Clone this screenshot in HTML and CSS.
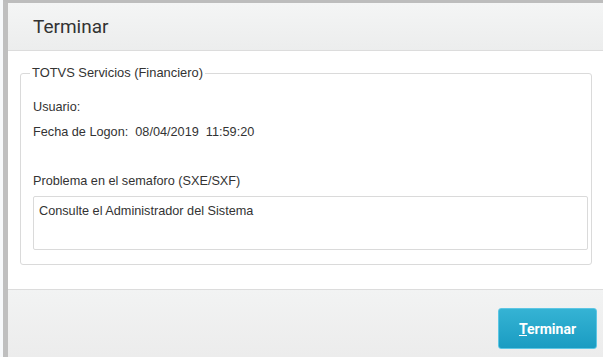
FILE: index.html
```html
<!DOCTYPE html>
<html lang="es">
<head>
  <meta charset="UTF-8">
  <title>Terminar</title>
  <link rel="stylesheet" href="styles.css">
</head>
<body>

  <div class="page">
    <div class="dialog">
      <div class="dialog-header">
        <h2>Terminar</h2>
      </div>

      <div class="dialog-body">
        <fieldset class="group">
          <legend>TOTVS Servicios (Financiero)</legend>
          <p class="line first">Usuario:</p>
          <p class="line">Fecha de Logon:&nbsp; 08/04/2019&nbsp; 11:59:20</p>
          <p class="line problem">Problema en el semaforo (SXE/SXF)</p>
          <div class="message">Consulte el Administrador del Sistema</div>
        </fieldset>
      </div>

      <div class="dialog-footer">
        <button class="btn-primary"><u>T</u>erminar</button>
      </div>
    </div>
  </div>

</body>
</html>
```

FILE: styles.css
```css
html, body {
  margin: 0;
  height: 100%;
}

body {
  font-family: 'Liberation Sans', Arial, sans-serif;
  background: #f7f9fb;
  color: #333;
}

.page {
  height: 100%;
  padding-left: 3px;
  box-sizing: border-box;
}

.dialog {
  height: 100%;
  box-sizing: border-box;
  border-top: 3px solid #bdbdbd;
  border-left: 5px solid #bfbfbf;
  background: #fff;
  display: flex;
  flex-direction: column;
}

.dialog-header {
  height: 47px;
  display: flex;
  align-items: center;
  padding-left: 25px;
  background: linear-gradient(#f4f5f5, #eceded);
  border-bottom: 1px solid #dcdcdc;
}

h2 {
  margin: 0;
  font-family: Roboto, 'Liberation Sans', sans-serif;
  font-size: 19px;
  font-weight: normal;
  color: #333;
}

.dialog-body {
  padding: 15px 11px 24px 12px;
}

.group {
  margin: 0;
  padding: 0 3px 14px 12px;
  border: 1px solid #dadada;
  border-radius: 3px;
}

.group legend {
  font-size: 12.9px;
  line-height: 14px;
  padding: 0 2px;
  margin-left: -3px;
  color: #333;
}

.line {
  margin: 0;
  font-size: 12.7px;
  line-height: 14px;
}

.line.first {
  margin-top: 20px;
}

.line + .line {
  margin-top: 11px;
}

.line.problem {
  margin-top: 35px;
}

.message {
  margin-top: 8px;
  border: 1px solid #dadada;
  border-radius: 2px;
  padding: 7px 5px 0;
  font-size: 12.7px;
  line-height: 14px;
  height: 45px;
}

.dialog-footer {
  flex: 1;
  border-top: 1px solid #dcdcdc;
  background: linear-gradient(#f2f3f3, #ececec);
  display: flex;
  justify-content: flex-end;
  align-items: flex-start;
  padding: 18px 6px 0 0;
}

.btn-primary {
  width: 99px;
  height: 41px;
  border: 1px solid #5cc6e4;
  border-radius: 3px;
  background: linear-gradient(#35b3d4, #1a9cc2);
  color: #fff;
  font-family: Roboto, 'Liberation Sans', sans-serif;
  font-size: 14px;
  font-weight: bold;
  cursor: pointer;
}
```
